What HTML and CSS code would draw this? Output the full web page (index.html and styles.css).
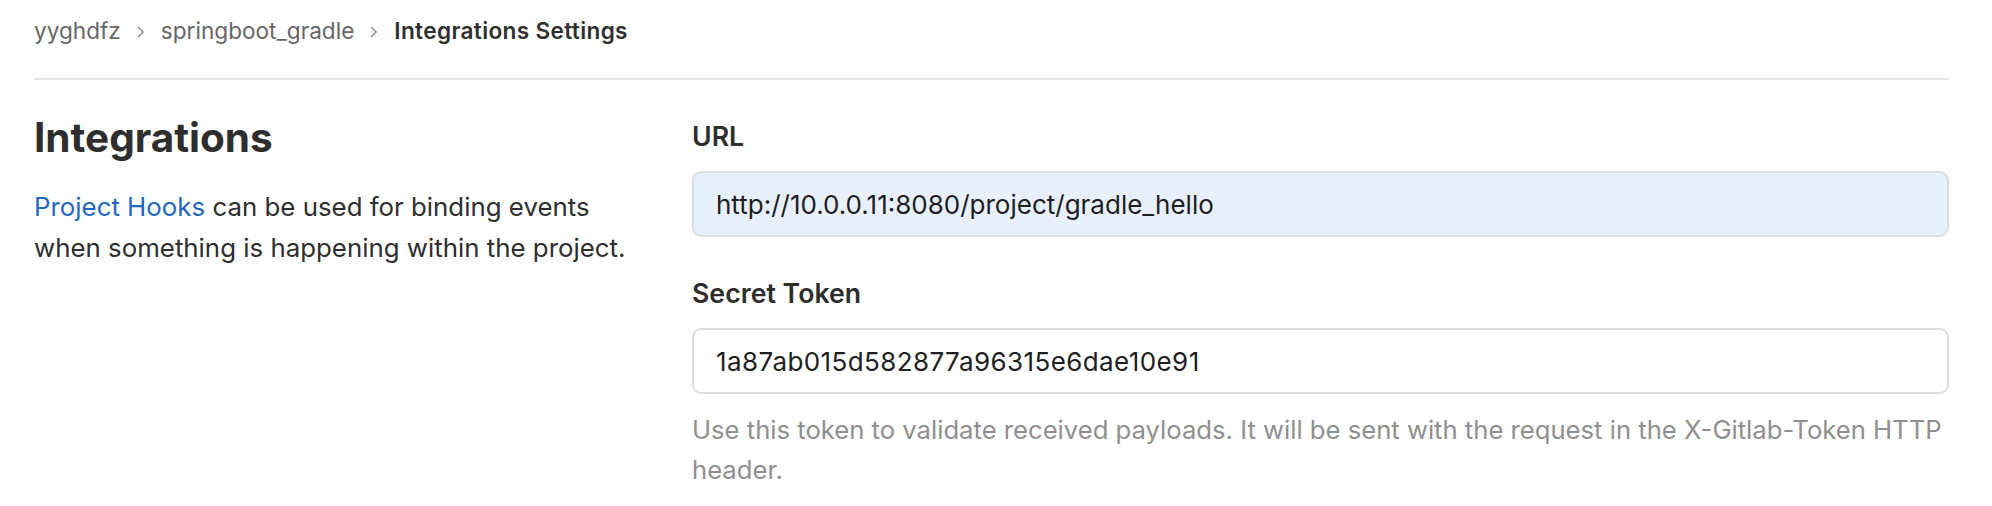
FILE: index.html
```html
<!DOCTYPE html>
<html lang="en">
<head>
<meta charset="utf-8">
<title>Integrations Settings</title>
<link rel="stylesheet" href="styles.css">
</head>
<body>
<div class="page">
  <nav class="breadcrumbs">
    <a class="crumb" href="#">yyghdfz</a>
    <svg class="chev" width="8" height="12" viewBox="0 0 8 12"><path d="M1.5 1.5 L6.2 6 L1.5 10.5" fill="none" stroke="#8a8a8a" stroke-width="1.4" stroke-linecap="round" stroke-linejoin="round"/></svg>
    <a class="crumb" href="#">springboot_gradle</a>
    <svg class="chev" width="8" height="12" viewBox="0 0 8 12"><path d="M1.5 1.5 L6.2 6 L1.5 10.5" fill="none" stroke="#8a8a8a" stroke-width="1.4" stroke-linecap="round" stroke-linejoin="round"/></svg>
    <strong class="crumb current">Integrations Settings</strong>
  </nav>
  <div class="settings-row">
    <div class="settings-intro">
      <h4 class="title">Integrations</h4>
      <p class="desc"><a href="#" class="link">Project Hooks</a> can be used for binding events when something is happening within the project.</p>
    </div>
    <form class="settings-form">
      <div class="field">
        <label class="label" for="url">URL</label>
        <input class="input autofilled" id="url" type="text" value="http://10.0.0.11:8080/project/gradle_hello">
      </div>
      <div class="field">
        <label class="label" for="token">Secret Token</label>
        <input class="input token" id="token" type="text" value="1a87ab015d582877a96315e6dae10e91">
        <p class="help">Use this token to validate received payloads. It will be sent with the request in the X-Gitlab-Token HTTP header.</p>
      </div>
    </form>
  </div>
</div>
</body>
</html>
```
FILE: styles.css
```css
* { box-sizing: border-box; }
html, body { margin: 0; padding: 0; background: #fff; }
body {
  font-family: Inter, "Noto Sans", sans-serif;
  color: #2e2e2e;
}
.page {
  padding: 19px 43px 0 34px;
}
.breadcrumbs {
  display: flex;
  align-items: center;
  gap: 16px;
  font-size: 22.6px;
  line-height: 24px;
  padding-bottom: 35px;
  border-bottom: 2px solid #e5e5e5;
}
.crumb { color: #666; text-decoration: none; }
.crumb.current { color: #303030; font-weight: 600; letter-spacing: 0.35px; }
.chev { display: block; margin-top: 1px; }

.settings-row {
  display: grid;
  grid-template-columns: 599px 1fr;
  column-gap: 59px;
  padding-top: 34px;
}
.title {
  margin: 0;
  font-size: 40.5px;
  line-height: 47px;
  font-weight: 700;
  color: #2e2e2e;
}
.desc {
  margin: 25px 0 0;
  font-size: 25.85px;
  line-height: 41px;
}
.link { color: #1f67c0; text-decoration: none; }

.settings-form { margin: 0; padding-top: 4px; }
.field { margin-bottom: 38px; }
.label {
  display: block;
  font-size: 26.7px;
  line-height: 36px;
  font-weight: 600;
  color: #2e2e2e;
  margin-bottom: 17px;
}
.input {
  display: block;
  width: 100%;
  height: 66px;
  padding: 0 22px;
  border: 2px solid #dedede;
  border-radius: 9px;
  background: #fff;
  font-family: inherit;
  font-size: 26px;
  color: #1e1e1e;
  outline: none;
}
.input.autofilled { background: #e8f0fe; }
.input.token { letter-spacing: 0.4px; }
.help {
  margin: 16px 0 0;
  font-size: 25.65px;
  line-height: 40px;
  color: #8f8f8f;
}
```
